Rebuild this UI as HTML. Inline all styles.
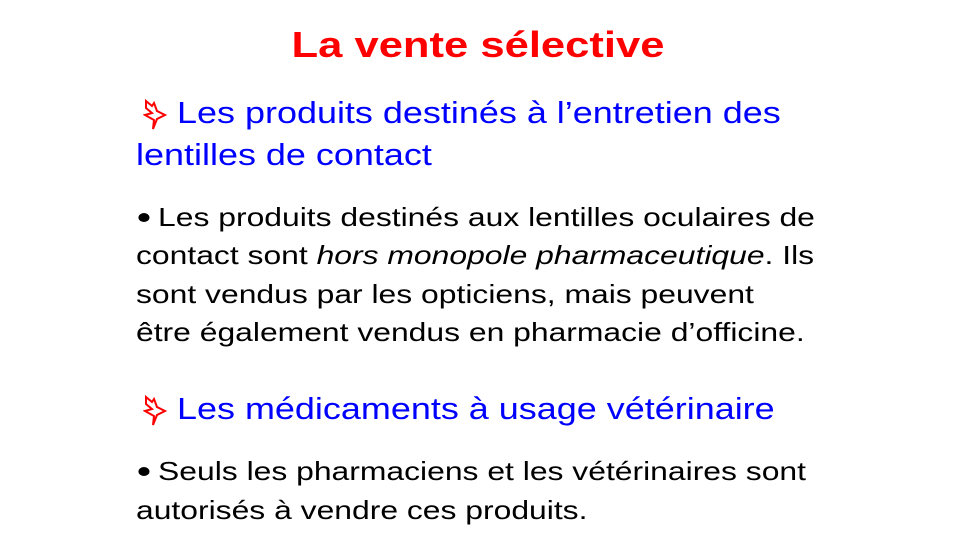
<!DOCTYPE html>
<html><head><meta charset="utf-8"><style>
body{margin:0;width:960px;height:540px;background:#fff;font-family:"Liberation Sans",Arial,sans-serif;position:relative;overflow:hidden}
div{position:absolute;white-space:nowrap;transform-origin:0 0}
.t{left:0;width:956px;text-align:center;top:24px;font-size:36px;font-weight:bold;color:#f00;transform:scaleX(1.21);transform-origin:478px 0}
.h{color:#00f;font-size:31px;left:136px;transform:scaleX(1.16)}
.b{color:#000;font-size:26px;left:136px;transform:scaleX(1.225)}
.d{display:inline-block;width:9px;height:9px;border-radius:50%;background:#000;vertical-align:middle;margin:0 7px 4px 2px}
svg{position:absolute}
</style></head><body>
<div class="t">La vente sélective</div>
<svg style="left:143px;top:99px" width="26" height="32" viewBox="0 0 26 32"><path d="M3 2 L9 7 L11 4 L14 12 L22 16 L14 20 L10 30 L11 21 L2 16 L9 14 L3 9 Z" fill="none" stroke="#f00" stroke-width="2"/></svg>
<div class="h" style="top:95px;left:177px">Les produits destinés à l’entretien des</div>
<div class="h" style="top:137px">lentilles de contact</div>
<div class="b" style="top:202px"><span class="d"></span>Les produits destinés aux lentilles oculaires de</div>
<div class="b" style="top:240px">contact sont <i>hors monopole pharmaceutique</i>. Ils</div>
<div class="b" style="top:279px">sont vendus par les opticiens, mais peuvent</div>
<div class="b" style="top:317px">être également vendus en pharmacie d’officine.</div>
<svg style="left:143px;top:395px" width="26" height="32" viewBox="0 0 26 32"><path d="M3 2 L9 7 L11 4 L14 12 L22 16 L14 20 L10 30 L11 21 L2 16 L9 14 L3 9 Z" fill="none" stroke="#f00" stroke-width="2"/></svg>
<div class="h" style="top:391px;left:177px">Les médicaments à usage vétérinaire</div>
<div class="b" style="top:456px"><span class="d"></span>Seuls les pharmaciens et les vétérinaires sont</div>
<div class="b" style="top:495px">autorisés à vendre ces produits.</div>
</body></html>
